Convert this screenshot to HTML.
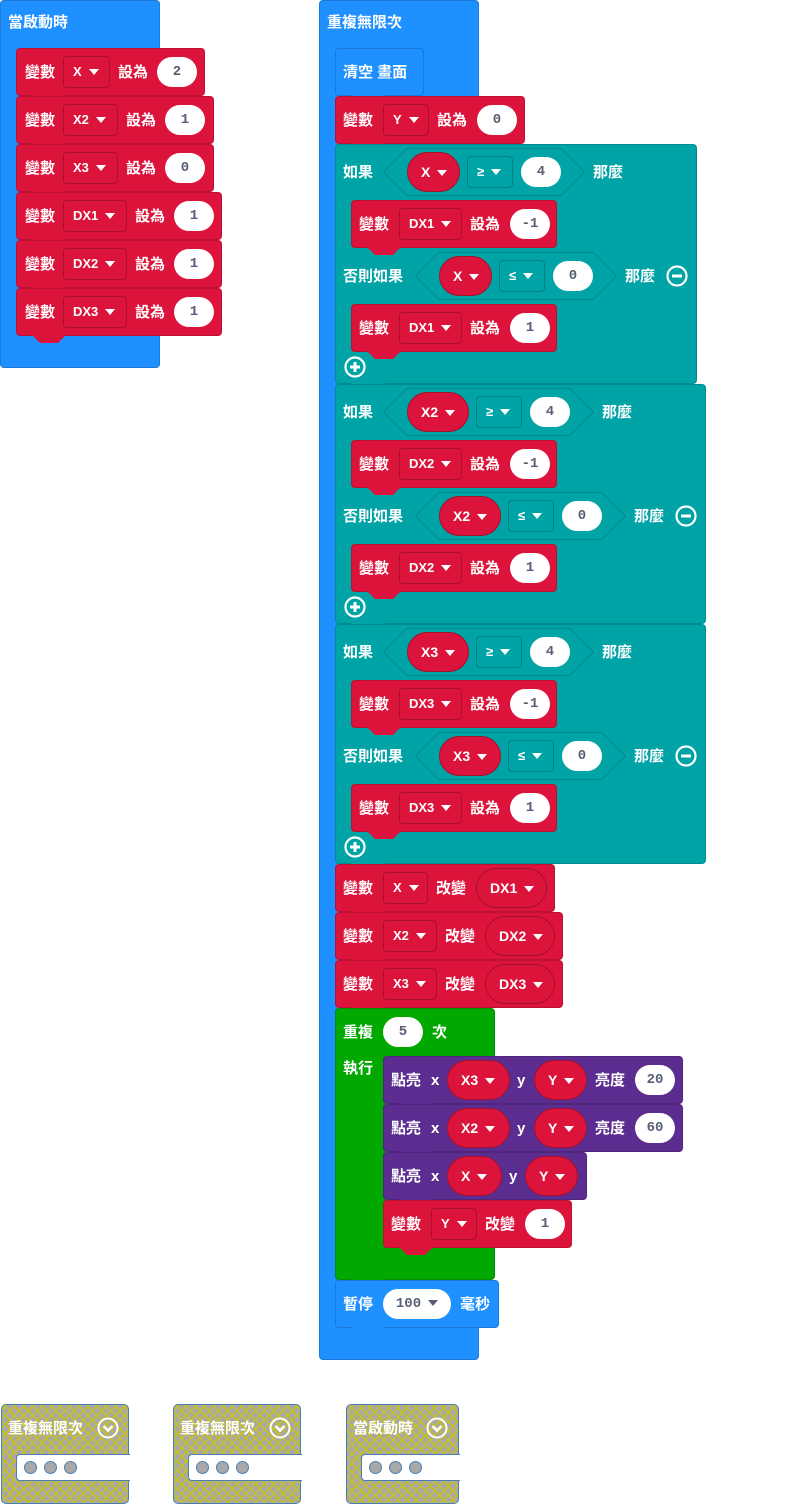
<!DOCTYPE html>
<html><head><meta charset="utf-8"><style>
body{margin:0;width:787px;height:1505px;background:#fff;position:relative;overflow:hidden;font-family:"Liberation Sans","Noto Sans CJK TC",sans-serif}
.b{position:absolute;border-radius:4px;box-sizing:border-box}
.t{position:absolute;color:#fff;font-weight:bold;font-size:15px;line-height:20px;white-space:nowrap}
.dd{position:absolute;height:32px;box-sizing:border-box;border:1px solid rgba(0,0,0,.22);border-radius:4px;color:#fff;font-weight:bold;font-size:13px;line-height:30px;padding-left:9px;white-space:nowrap}
.ov{position:absolute;height:40px;box-sizing:border-box;border:1px solid #a5102c;border-radius:20px;background:#dc143c;color:#fff;font-weight:bold;font-size:14px;line-height:38px;padding-left:13px;white-space:nowrap}
.p{position:absolute;height:30px;border-radius:15px;background:#fff;color:#575e75;font-family:"Liberation Mono",monospace;font-weight:bold;font-size:14px;line-height:30px;text-align:center}
.ar{display:inline-block;width:0;height:0;border-left:5px solid transparent;border-right:5px solid transparent;border-top:6px solid #fff;margin-left:7px;vertical-align:1px}
.col{position:absolute;height:100px;box-sizing:border-box;border:1px solid #4a7fb5;border-radius:5px;background-color:#a8a8a8;background-image:repeating-linear-gradient(45deg,transparent 0 5px,#c6c020 5px 6.5px),repeating-linear-gradient(-45deg,transparent 0 5px,#c6c020 5px 6.5px)}
</style></head><body>
<div id="r"></div>
<script>
var R=document.getElementById('r'),H='';
var BL='#1e90ff',RD='#dc143c',TL='#00a4a6',GR='#00a800',PU='#5c2d91';
function blk(x,y,w,h,c,tab){H+='<div class="b" style="left:'+x+'px;top:'+y+'px;width:'+w+'px;height:'+h+'px;background:'+c+';border:1px solid rgba(0,0,0,.15)"></div>';
 if(tab)H+='<svg style="position:absolute;left:'+(x+16)+'px;top:'+(y+h-1)+'px" width="36" height="10"><path d="M0 0 L8 8 L26 8 L34 0Z" fill="'+c+'"/></svg>';}
function t(x,cy,s){H+='<div class="t" style="left:'+x+'px;top:'+(cy-9)+'px">'+s+'</div>';}
function dd(x1,x2,cy,s,c){H+='<div class="dd" style="left:'+x1+'px;top:'+(cy-16)+'px;width:'+(x2-x1)+'px;background:'+c+'">'+s+'<span class="ar"></span></div>';}
function ov(x1,x2,cy,s){H+='<div class="ov" style="left:'+x1+'px;top:'+(cy-20)+'px;width:'+(x2-x1)+'px">'+s+'<span class="ar"></span></div>';}
function p(x1,x2,cy,s){H+='<div class="p" style="left:'+x1+'px;top:'+(cy-15)+'px;width:'+(x2-x1)+'px">'+s+'</div>';}
function hex(x1,x2,cy){var w=x2-x1;H+='<svg style="position:absolute;left:'+x1+'px;top:'+(cy-24)+'px" width="'+w+'" height="48"><path d="M24 .5 L'+(w-24)+' .5 L'+(w-.5)+' 24 L'+(w-24)+' 47.5 L24 47.5 L.5 24Z" fill="#00a4a6" stroke="#008a8c"/></svg>';}
function circ(cx,cy,plus){H+='<svg style="position:absolute;left:'+(cx-11)+'px;top:'+(cy-11)+'px" width="22" height="22"><circle cx="11" cy="11" r="9.5" fill="none" stroke="#fff" stroke-width="2.2"/><path d="M6 11H16'+(plus?'M11 6V16':'')+'" stroke="#fff" stroke-width="3"/></svg>';}
blk(0,0,160,368,BL);
t(8,22,'當啟動時');
var L=[[205,'X',110,'2'],[214,'X2',118,'1'],[214,'X3',118,'0'],[222,'DX1',127,'1'],[222,'DX2',127,'1'],[222,'DX3',127,'1']];
L.forEach(function(r,i){var y=48+i*48;blk(16,y,r[0]-16,48,RD,1);});
L.forEach(function(r,i){var cy=72+i*48;t(25,cy,'變數');dd(63,r[2],cy,r[1],RD);t(r[2]+8,cy,'設為');p(r[2]+47,r[2]+87,cy,r[3]);});
blk(319,0,160,1360,BL);
t(327,22,'重複無限次');
blk(335,48,89,48,BL,1);t(343,72,'清空 畫面');
blk(335,96,190,48,RD,1);t(343,120,'變數');dd(383,429,120,'Y',RD);t(437,120,'設為');p(477,517,120,'0');
function ifb(y,v,vx2,r,w){
 blk(335,y,w,240,TL,1);
 var cy=y+28;t(343,cy,'如果');hex(383,r,cy);ov(407,vx2,cy,v);dd(vx2+7,vx2+53,cy,'≥','#00a4a6');p(vx2+61,vx2+101,cy,'4');t(r+8,cy,'那麼');
 var dv='DX'+(v=='X'?'1':v.slice(1));
 blk(351,y+56,206,48,RD,1);t(359,y+80,'變數');dd(399,462,y+80,dv,RD);t(470,y+80,'設為');p(510,550,y+80,'-1');
 cy=y+132;t(343,cy,'否則如果');hex(415,r+32,cy);ov(439,vx2+32,cy,v);dd(vx2+39,vx2+85,cy,'≤','#00a4a6');p(vx2+93,vx2+133,cy,'0');t(r+40,cy,'那麼');circ(r+92,cy,0);
 blk(351,y+160,206,48,RD,1);t(359,y+184,'變數');dd(399,462,y+184,dv,RD);t(470,y+184,'設為');p(510,550,y+184,'1');
 circ(355,y+223,1);
}
ifb(144,'X',460,585,362);
ifb(384,'X2',469,594,371);
ifb(624,'X3',469,594,371);
var C=[['X',428,'DX1',547,555],['X2',437,'DX2',555,563],['X3',437,'DX3',555,563]];
C.forEach(function(r,i){var y=864+i*48;blk(335,y,r[4]-335,48,RD,1);});
C.forEach(function(r,i){var cy=888+i*48;t(343,cy,'變數');dd(383,r[1],cy,r[0],RD);t(r[1]+8,cy,'改變');ov(r[1]+48,r[3],cy,r[2]);});
blk(335,1008,160,272,GR,1);
t(343,1032,'重複');p(383,423,1032,'5');t(432,1032,'次');t(343,1068,'執行');
blk(383,1056,300,48,PU,1);blk(383,1104,300,48,PU,1);blk(383,1152,204,48,PU,1);blk(383,1200,189,48,RD,1);
[['X3','20',1080],['X2','60',1128]].forEach(function(r){var cy=r[2];t(391,cy,'點亮');t(431,cy,'x');ov(447,510,cy,r[0]);t(517,cy,'y');ov(534,587,cy,'Y');t(595,cy,'亮度');p(635,675,cy,r[1]);});
t(391,1176,'點亮');t(431,1176,'x');ov(447,502,1176,'X');t(509,1176,'y');ov(525,578,1176,'Y');
t(391,1224,'變數');dd(431,477,1224,'Y',RD);t(485,1224,'改變');p(525,565,1224,'1');
blk(335,1280,164,48,BL,1);t(343,1304,'暫停');
H+='<div class="p" style="left:383px;top:1289px;width:68px">100<span class="ar" style="border-top-color:#575e75"></span></div>';
t(460,1304,'毫秒');
[[1,'重複無限次',128,107],[173,'重複無限次',128,107],[346,'當啟動時',113,91]].forEach(function(c){var x=c[0];
 H+='<div class="col" style="left:'+x+'px;top:1404px;width:'+c[2]+'px"></div>';
 H+='<div style="position:absolute;left:'+(x+15)+'px;top:1454px;width:'+(c[2]-14)+'px;height:27px;background:#fff;border:1px solid #4a7fb5;border-right:none;border-radius:4px 0 0 4px;box-sizing:border-box"></div>';
 t(x+7,1428,c[1]);
 var cx=x+c[3];
 H+='<svg style="position:absolute;left:'+(cx-11)+'px;top:1417px" width="22" height="22"><circle cx="11" cy="11" r="9.5" fill="none" stroke="#fff" stroke-width="2"/><path d="M6.5 9 L11 13.5 L15.5 9" fill="none" stroke="#fff" stroke-width="2.6"/></svg>';
 [29,49,69].forEach(function(d){H+='<div style="position:absolute;left:'+(x+d-6)+'px;top:1461px;width:13px;height:13px;border-radius:50%;background:#a8a8a8;border:1px solid #4a7fb5;box-sizing:border-box"></div>';});
});
R.innerHTML=H;
</script>
</body></html>
